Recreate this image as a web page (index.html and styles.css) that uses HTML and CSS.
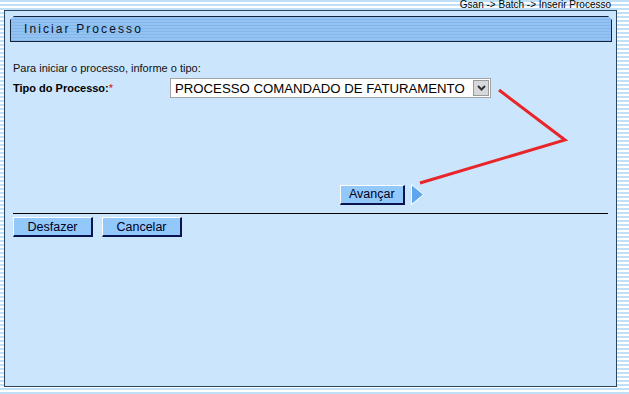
FILE: index.html
```html
<!DOCTYPE html>
<html lang="pt-BR">
<head>
    <meta charset="UTF-8">
    <title>Iniciar Processo</title>
    <link rel="stylesheet" href="styles.css">
</head>
<body>
    <div class="trilha">Gsan -&gt; Batch -&gt; Inserir Processo</div>

    <div class="painel">
        <!-- barra do titulo -->
        <div class="titulo">Iniciar Processo</div>

        <div class="conteudo">
            <p class="instrucao">Para iniciar o processo, informe o tipo:</p>

            <div class="linha">
                <span class="rotulo">Tipo do Processo:<span class="obrig">*</span></span>
                <div class="combo">
                    <span class="combo-texto">PROCESSO COMANDADO DE FATURAMENTO</span>
                    <span class="combo-botao">
                        <svg width="9" height="6" viewBox="0 0 9 6"><path d="M1 1 L4.5 4.5 L8 1" fill="none" stroke="#333" stroke-width="2"/></svg>
                    </span>
                </div>
            </div>

            <div class="avancar">
                <button class="botao">Avançar</button>
                <svg class="seta" width="13" height="21" viewBox="0 0 13 21"><path d="M0.5 0.5 L12.5 10.5 L0.5 20.5 Z" fill="#5ea6ee" stroke="#ffffff" stroke-width="1"/></svg>
            </div>

            <hr class="divisor">

            <div class="acoes">
                <button class="botao largo">Desfazer</button>
                <button class="botao largo">Cancelar</button>
            </div>
        </div>

        <!-- traco vermelho por cima -->
        <svg class="risco" width="629" height="394" viewBox="0 0 629 394">
            <polyline points="499,90 565,140 420,183" fill="none" stroke="#e8262a" stroke-width="3"/>
        </svg>
    </div>
</body>
</html>
```

FILE: styles.css
```css
/* fundo listrado */
body {
    margin: 0;
    font-family: 'Liberation Sans', Arial, sans-serif;
    background-color: #ffffff;
    background-image: repeating-linear-gradient(to bottom, #bfe0f6 0, #bfe0f6 2px, #ffffff 2px, #ffffff 4px);
    height: 394px;
    overflow: hidden;
}

.trilha {
    height: 10px;
    font-size: 10px;
    line-height: 10px;
    text-align: right;
    padding-right: 18px;
    color: #000;
}

.painel {
    margin-left: 4px;
    width: 611px;
    height: 375px;
    background-color: #cbe5fd;
    border: 1px solid #2a4560;
}

.titulo {
    margin: 5px 4px 0 5px;
    height: 24px;
    border: 1px solid #142233;
    background-color: #88bbee;
    background-image: repeating-linear-gradient(to bottom, #92c3f2 0, #92c3f2 2px, #84b6ea 2px, #84b6ea 3px);
    clip-path: polygon(4px 0, calc(100% - 4px) 0, 100% 4px, 100% 100%, 0 100%, 0 4px);
    font-size: 12px;
    line-height: 25px;
    letter-spacing: 2.1px;
    padding-left: 13px;
    color: #0a1020;
}

.conteudo {
    padding: 0 8px;
}

.instrucao {
    margin: 19px 0 0 0;
    font-size: 11px;
    line-height: 14px;
    color: #111;
}

.linha {
    display: flex;
    align-items: center;
    margin-top: 3px;
}

.rotulo {
    width: 157px;
    font-size: 11px;
    font-weight: bold;
    color: #000;
}

.obrig {
    color: #e00000;
    font-weight: normal;
}

.combo {
    display: flex;
    align-items: center;
    width: 319px;
    height: 18px;
    border: 1px solid #a4a4a4;
    background-color: #ffffff;
}

.combo-texto {
    flex: 1;
    font-size: 13.2px;
    padding-left: 4px;
    color: #000;
    white-space: nowrap;
}

.combo-botao {
    display: flex;
    align-items: center;
    justify-content: center;
    width: 14px;
    height: 14px;
    margin-right: 1px;
    border: 1px solid #9a9a9a;
    background-color: #d6d8dc;
}

.avancar {
    display: flex;
    align-items: center;
    margin-top: 86px;
    padding-left: 327px;
}

.seta {
    margin-left: 6px;
}

.botao {
    font-family: 'Liberation Sans', Arial, sans-serif;
    font-size: 12.5px;
    color: #000022;
    height: 20px;
    padding: 0 8px;
    background-color: #93c8fb;
    border-top: 1px solid #ffffff;
    border-left: 1px solid #ffffff;
    border-right: 2px solid #0a1450;
    border-bottom: 2px solid #0a1450;
}

.divisor {
    margin: 8px 0 0 0;
    border: none;
    border-top: 1px solid #000;
}

.acoes {
    display: flex;
    gap: 9px;
    margin-top: 3px;
}

.largo {
    width: 80px;
}

.risco {
    position: absolute;
    left: 0;
    top: 0;
    pointer-events: none;
}
```
